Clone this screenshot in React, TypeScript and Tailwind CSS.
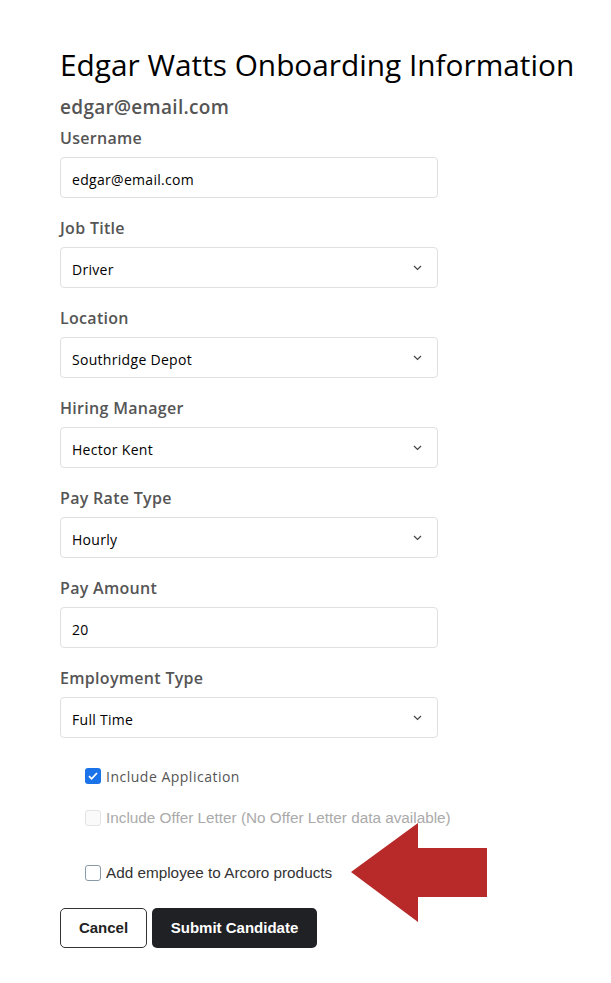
import React from 'react';

const fields = [
  { label: 'Username', value: 'edgar@email.com', select: false },
  { label: 'Job Title', value: 'Driver', select: true },
  { label: 'Location', value: 'Southridge Depot', select: true },
  { label: 'Hiring Manager', value: 'Hector Kent', select: true },
  { label: 'Pay Rate Type', value: 'Hourly', select: true },
  { label: 'Pay Amount', value: '20', select: false },
  { label: 'Employment Type', value: 'Full Time', select: true },
];

function Chevron() {
  return (
    <svg width="9" height="6" viewBox="0 0 9 6" className="absolute right-[15px] top-[17px]">
      <path d="M1 1l3.5 3.5L8 1" fill="none" stroke="#444" strokeWidth="1.2" />
    </svg>
  );
}

export default function App() {
  return (
    <div className="relative min-h-[983px] w-[611px] bg-white pl-[60px] pt-[46px]" style={{ fontFamily: '"Open Sans", sans-serif' }}>
      <h1 className="text-[29.8px] leading-[38px] text-black font-normal">Edgar Watts Onboarding Information</h1>
      <div className="mt-[11px] text-[19px] leading-[24px] font-semibold tracking-[0.3px] text-[#555]">edgar@email.com</div>

      <div className="mt-[7px] flex flex-col gap-[18px]">
        {fields.map((f) => (
          <div key={f.label} className="flex flex-col gap-[7px]">
            <label className="text-[16px] leading-[24px] font-semibold tracking-[0.3px] text-[#555]">{f.label}</label>
            <div className="relative flex h-[41px] w-[378px] items-center rounded-[4px] border border-[#e0e0e0] px-[11px] text-[14px] tracking-[0.3px] text-black">
              <span className="pt-[4px]">{f.value}</span>
              {f.select && <Chevron />}
            </div>
          </div>
        ))}
      </div>

      <div className="ml-[25px] mt-[29px] flex flex-col">
        <div className="flex h-[18px] items-center gap-[5px]">
          <span className="flex h-[16px] w-[16px] items-center justify-center rounded-[3px] bg-[#1a73e8]">
            <svg width="12" height="12" viewBox="0 0 12 12">
              <path d="M2 6.2l2.6 2.6L10 3" fill="none" stroke="white" strokeWidth="1.8" />
            </svg>
          </span>
          <span className="text-[14px] tracking-[0.5px] text-[#555]">Include Application</span>
        </div>
        <div className="mt-[24px] flex h-[18px] items-center gap-[5px]" style={{ fontFamily: '"Liberation Sans", Arial, sans-serif' }}>
          <span className="h-[16px] w-[16px] rounded-[3px] border border-[#e3e3e3] bg-[#fafafa]" />
          <span className="text-[15.3px] text-[#aaa]">Include Offer Letter (No Offer Letter data available)</span>
        </div>
        <div className="mt-[37px] flex h-[18px] items-center gap-[5px]" style={{ fontFamily: '"Liberation Sans", Arial, sans-serif' }}>
          <span className="h-[16px] w-[16px] rounded-[3px] border border-[#8a9aa8] bg-white" />
          <span className="text-[15.3px] text-[#333]">Add employee to Arcoro products</span>
        </div>
      </div>

      <div className="mt-[26px] flex gap-[5px]" style={{ fontFamily: '"Liberation Sans", Arial, sans-serif' }}>
        <button className="h-[40px] w-[87px] rounded-[5px] border border-[#333] bg-white text-[15px] font-bold text-[#222]">Cancel</button>
        <button className="h-[40px] w-[165px] rounded-[5px] bg-[#1f2124] text-[15px] font-bold text-white">Submit Candidate</button>
      </div>

      <svg className="absolute left-[351px] top-[823px]" width="136" height="100" viewBox="0 0 136 100">
        <polygon points="0,49 67,0 67,25 136,25 136,74 67,74 67,99" fill="#b82a2a" />
      </svg>
    </div>
  );
}
